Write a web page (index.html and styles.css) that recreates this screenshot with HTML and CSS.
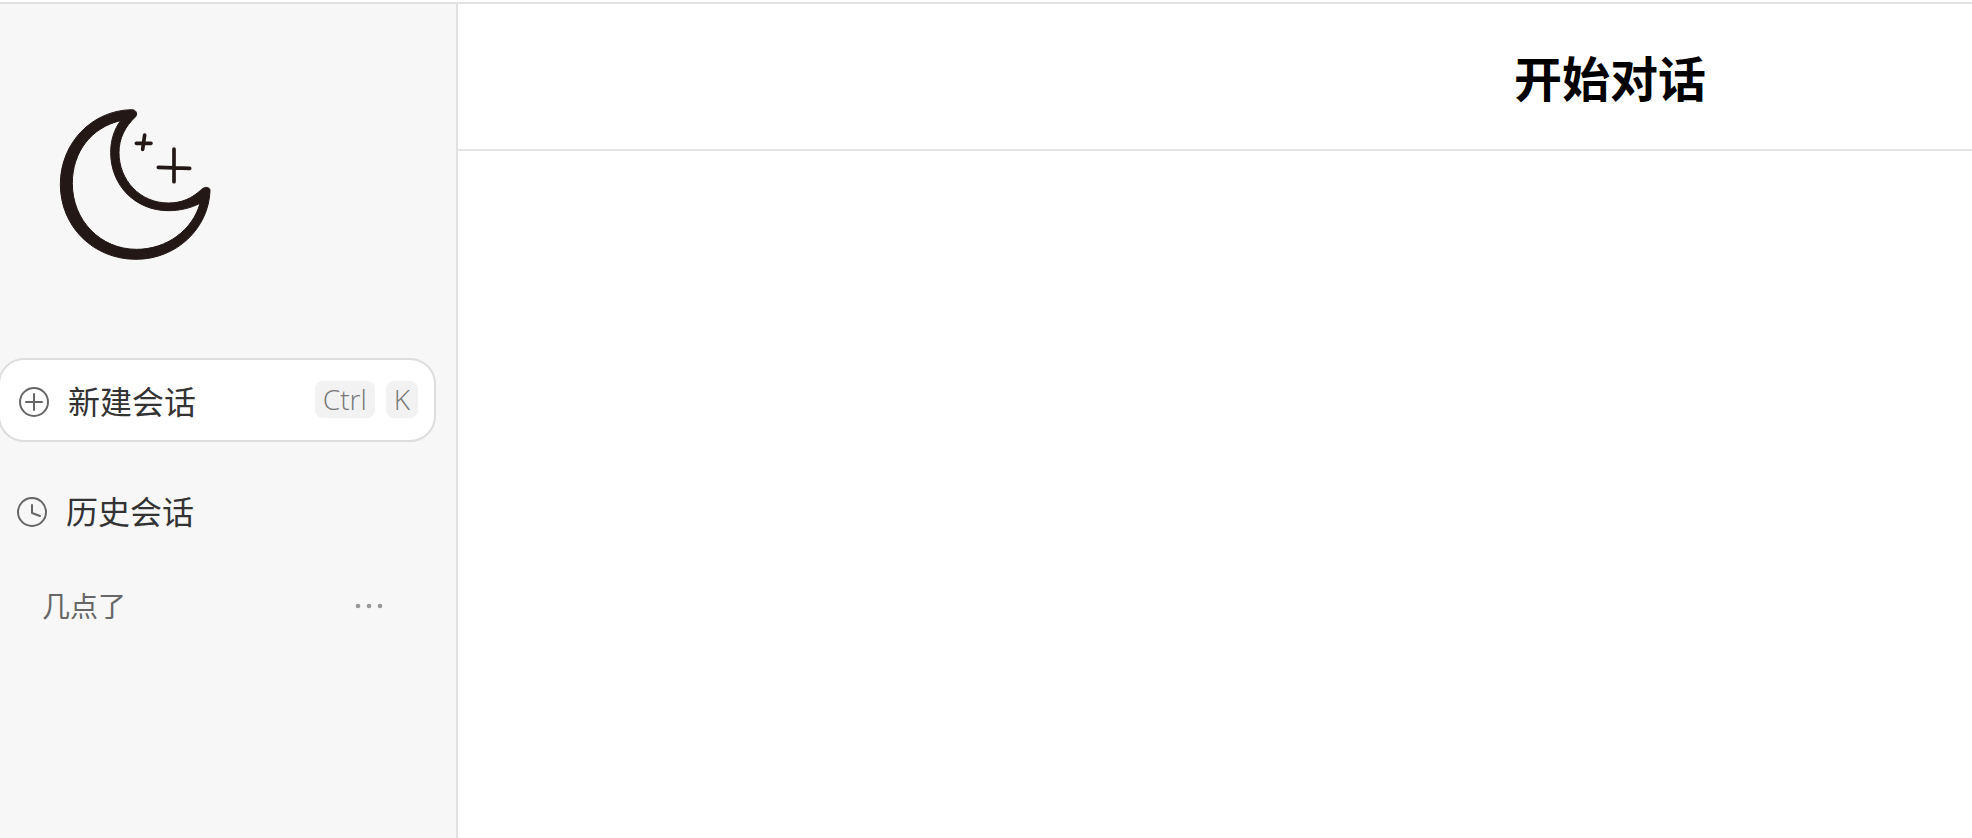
FILE: index.html
```html
<!DOCTYPE html>
<html lang="zh-CN">
<head>
  <meta charset="UTF-8" />
  <meta name="viewport" content="width=device-width, initial-scale=1.0"/>
  <title>开始对话</title>
  <link rel="stylesheet" href="styles.css">
</head>
<body>
  <div class="page">
    <aside class="sidebar">
      <svg class="logo" viewBox="0 0 570 540" aria-hidden="true">
        <path class="moon" fill-rule="evenodd" d="M275 59C155 61 61 160 61 283C61 410 160 508 288 508C410 508 505 415 510 304C512 290 494 289 485 298C455 326 425 339 385 339C300 339 237 270 237 188C237 145 255 110 287 80C294 69 287 59 275 59ZM242 92C155 112 97 185 97 280C97 390 180 478 290 478C380 478 458 420 480 340C450 355 420 362 385 362C285 362 212 285 212 188C212 152 222 118 242 92Z"/>
        <path class="star" d="M314 135L308 178M289 160L333 160M402 177V275M355 232L449 235"/>
      </svg>

      <button type="button" class="new-chat">
        <svg class="icon" viewBox="0 0 30 30" aria-hidden="true">
          <circle cx="15" cy="15" r="14"/>
          <path d="M15 7V23M7 15H23"/>
        </svg>
        <span class="label">新建会话</span>
        <kbd>Ctrl</kbd>
        <kbd>K</kbd>
      </button>

      <h2 class="history-title">
        <svg class="icon" viewBox="0 0 30 30" aria-hidden="true">
          <circle cx="15" cy="15" r="14"/>
          <path d="M15 8V16L23 19"/>
        </svg>
        历史会话
      </h2>
      <ul class="history-list">
        <li>
          <a href="#">几点了</a>
          <button type="button" class="more" aria-label="更多">
            <svg viewBox="0 0 28 6" aria-hidden="true">
              <circle cx="3" cy="3" r="2.3"/>
              <circle cx="14" cy="3" r="2.3"/>
              <circle cx="25" cy="3" r="2.3"/>
            </svg>
          </button>
        </li>
      </ul>
    </aside>

    <main class="chat">
      <header class="chat-header">
        <h1>开始对话</h1>
      </header>
    </main>
  </div>
</body>
</html>
```
FILE: styles.css
```css
* {
  box-sizing: border-box;
}
body {
  margin: 0;
  padding-top: 2px;
  background: #fff;
  font-family: "Open Sans", "Noto Sans CJK SC", sans-serif;
}
button {
  font-family: inherit;
  cursor: pointer;
}
.page {
  display: flex;
  min-height: calc(100vh - 2px);
  border-top: 2px solid #e1e1e1;
}

/* sidebar */
.sidebar {
  flex: 0 0 458px;
  padding: 86px 20px 0 0;
  background: #f7f7f7;
  border-right: 2px solid #e1e1e1;
}
.logo {
  display: block;
  width: 190px;
  height: 180px;
  margin-left: 40px;
}
.moon {
  fill: #231815;
  stroke: #231815;
  stroke-width: 3;
}
.star {
  fill: none;
  stroke: #231815;
  stroke-width: 11;
  stroke-linecap: round;
}
.icon {
  flex: none;
  width: 30px;
  height: 30px;
  fill: none;
  stroke: #666;
  stroke-width: 2;
  stroke-linecap: round;
  stroke-linejoin: round;
}
.new-chat {
  display: flex;
  align-items: center;
  gap: 11px;
  width: calc(100% + 2px);
  height: 84px;
  margin: 88px 0 0 -2px;
  padding: 4px 16px 0 19px;
  background: #fff;
  border: 2px solid #ddd;
  border-radius: 26px;
  color: #333;
}
.new-chat .label {
  flex: 1;
  margin-left: 8px;
  font-size: 32px;
  line-height: 48px;
  font-weight: 400;
  text-align: left;
}
kbd {
  margin-bottom: 5px;
  padding: 0 8px;
  background: #f2f2f2;
  border-radius: 8px;
  color: #777;
  font-family: inherit;
  font-size: 28px;
  line-height: 37px;
  font-weight: 300;
}
.history-title {
  display: flex;
  align-items: center;
  gap: 19px;
  margin: 46px 0 0;
  padding-left: 17px;
  color: #333;
  font-size: 32px;
  line-height: 48px;
  font-weight: 400;
}
.history-list {
  margin: 48px 0 0;
  padding: 0 53px 0 42px;
  list-style: none;
}
.history-list li {
  display: flex;
  align-items: center;
  justify-content: space-between;
}
.history-list a {
  color: #666;
  font-size: 28px;
  line-height: 44px;
  font-weight: 400;
  text-decoration: none;
}
.more {
  display: flex;
  padding: 0;
  background: none;
  border: none;
}
.more svg {
  width: 28px;
  height: 6px;
  fill: #999;
}

/* chat area */
.chat {
  flex: 1;
}
.chat-header {
  display: flex;
  justify-content: flex-end;
  align-items: center;
  height: 147px;
  padding: 4px 266px 0 0;
  border-bottom: 2px solid #e4e4e4;
}
.chat-header h1 {
  margin: 0;
  color: #000;
  font-size: 48px;
  line-height: 64px;
  font-weight: 700;
}
```
